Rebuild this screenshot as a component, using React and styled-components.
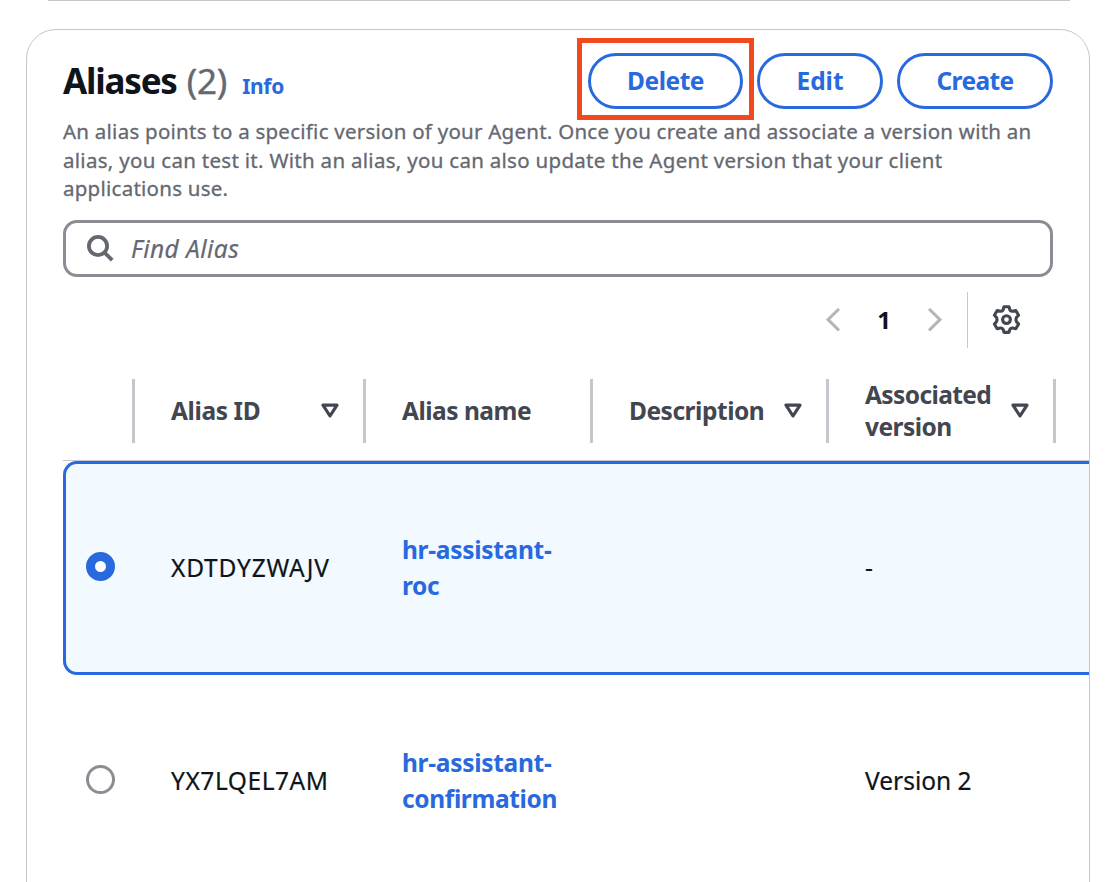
import React from 'react';
import styled, { createGlobalStyle } from 'styled-components';

const Global = createGlobalStyle`
  * { box-sizing: border-box; }
  html, body { margin: 0; background: #fff; overflow: hidden; }
  body { font-family: "Noto Sans", "Open Sans", sans-serif; color: #0f141a; }
`;

const Page = styled.div`
  height: 882px;
  overflow: hidden;
  padding: 0 18px 0 26px;
`;

const PreviousCard = styled.div`
  height: 1px;
  margin: 0 20px 28px 22px;
  background: #c6c6cd;
`;

const Card = styled.section`
  height: 900px;
  border: 1px solid #c6c6cd;
  border-radius: 30px;
  padding: 23px 0 0 36px;
  overflow: hidden;
`;

const Head = styled.header`
  width: 990px;
  height: 56px;
  display: flex;
  justify-content: space-between;
`;

const Heading = styled.div`
  display: flex;
  align-items: baseline;
  height: 56px;
  line-height: 56px;
`;

const Title = styled.h2`
  margin: 0;
  font-size: 35px;
  font-weight: 700;
  letter-spacing: -1.2px;
`;

const Count = styled.span`
  margin-left: 10px;
  font-size: 35px;
  color: #656871;
  letter-spacing: -0.2px;
  -webkit-text-stroke: 0.4px #656871;
`;

const Info = styled.a`
  margin-left: 15px;
  font-size: 21px;
  font-weight: 700;
  letter-spacing: -0.3px;
  color: #2969de;
`;

const Actions = styled.div`
  display: flex;
  gap: 14px;
`;

const Button = styled.button`
  width: ${(p) => p.$width}px;
  height: 56px;
  padding: 0 0 1px;
  border: 3px solid #2969de;
  border-radius: 28px;
  background: #fff;
  color: #2969de;
  font: 700 24.5px "Noto Sans", sans-serif;
  letter-spacing: ${(p) => p.$spacing || 0}px;
`;

const Marked = styled.div`
  position: relative;
  &::after {
    content: "";
    position: absolute;
    inset: -15px -11px -11px -11px;
    border: 5px solid #f2481d;
  }
`;

const Description = styled.p`
  margin: 8px 0 0;
  font-size: 20.5px;
  line-height: 28.5px;
  color: #656871;
  white-space: nowrap;
  -webkit-text-stroke: 0.3px #656871;
`;

const Line = styled.span`
  display: block;
  letter-spacing: ${(p) => p.$spacing || 0}px;
`;

const Search = styled.div`
  width: 990px;
  height: 57px;
  margin-top: 17px;
  padding: 1px 0 0 21px;
  display: flex;
  align-items: center;
  border: 3px solid #8c8c94;
  border-radius: 14px;
  color: #656871;
`;

const Placeholder = styled.span`
  margin-left: 17px;
  font-size: 24.5px;
  font-style: italic;
  letter-spacing: 0.45px;
  -webkit-text-stroke: 0.2px #656871;
`;

const Tools = styled.div`
  width: 990px;
  height: 56px;
  margin-top: 15px;
  padding-right: 32px;
  display: flex;
  justify-content: flex-end;
  align-items: center;
  color: #b4b4bb;
`;

const PageNumber = styled.span`
  width: 88px;
  text-align: center;
  font-size: 24px;
  font-weight: 700;
  color: #0f141a;
`;

const Divider = styled.div`
  width: 1px;
  height: 56px;
  margin: 0 24px 0 25px;
  background: #c6c6cd;
`;

const Row = styled.div`
  display: grid;
  grid-template-columns: 72px 231px 227px 236px 227px 60px;
  width: 1053px;
  align-items: center;
`;

const HeaderRow = styled(Row)`
  height: 113px;
  padding: 31px 0 17px;
  border-bottom: 1px solid #c6c6cd;
`;

const HeaderCell = styled.div`
  height: 64px;
  padding: 0 24px 0 36px;
  display: flex;
  align-items: center;
  justify-content: space-between;
  border-right: 3px solid #c6c6cd;
  font-size: 24.5px;
  line-height: 32px;
  font-weight: 700;
  color: #424650;
  white-space: nowrap;
`;

const BodyRow = styled(Row)`
  height: ${(p) => (p.$selected ? 214 : 212)}px;
  background: ${(p) => (p.$selected ? '#f2faff' : '#fff')};
  box-shadow: ${(p) => (p.$selected ? 'inset 0 0 0 3px #2969de' : 'none')};
  border-radius: 14px;
`;

const RadioCell = styled.div`
  padding: 0 0 2px 23px;
  display: flex;
`;

const Radio = styled.div`
  width: 29px;
  height: 29px;
  border-radius: 50%;
  border: ${(p) => (p.$checked ? '9px solid #2969de' : '3px solid #8c8c94')};
  background: #fff;
`;

const Cell = styled.div`
  padding-left: 36px;
  font-size: 24.5px;
  line-height: 36px;
  white-space: nowrap;
  letter-spacing: ${(p) => p.$spacing || 0}px;
  -webkit-text-stroke: ${(p) => (p.$link ? 0 : 0.2)}px #0f141a;
`;

const AliasLink = styled.a`
  display: block;
  font-weight: 700;
  color: #2969de;
`;

const Caret = () => (
  <svg width="18" height="15" viewBox="0 0 18 15" fill="none" stroke="#424650" strokeWidth="3.2" strokeLinejoin="round">
    <path d="M2 2.2H16L9 13Z" />
  </svg>
);

const Chevron = ({ right }) => (
  <svg width="14" height="24" viewBox="0 0 14 24" fill="none" stroke="currentColor" strokeWidth="3">
    <path d={right ? 'M1 1L12 11.7L1 22.4' : 'M13 1L2 11.7L13 22.4'} />
  </svg>
);

const SearchIcon = () => (
  <svg width="27" height="27" viewBox="0 0 27 27" fill="none" stroke="currentColor" strokeWidth="3.8">
    <circle cx="11" cy="11" r="9.1" />
    <path d="M17.3 17.3L25.2 25.2" />
  </svg>
);

const Gear = () => (
  <svg width="29" height="30" viewBox="0 0 29 30" fill="none" stroke="#424650" strokeWidth="3.1" strokeLinejoin="round">
    <path d="M12 1.8H17L17.8 4.6Q18.5 6.5 20.6 6.2L23.8 5.5L26.6 10.2L24.6 12.3Q23.4 14.6 24.6 16.9L26.6 19L23.8 23.7L20.6 23Q18.5 22.7 17.8 24.6L17 27.4H12L11.2 24.6Q10.5 22.7 8.4 23L5.2 23.7L2.4 19L4.4 16.9Q5.6 14.6 4.4 12.3L2.4 10.2L5.2 5.5L8.4 6.2Q10.5 6.5 11.2 4.6Z" />
    <circle cx="14.5" cy="14.6" r="3.9" />
  </svg>
);

export default function App() {
  return (
    <Page>
      <Global />
      <PreviousCard />
      <Card>
        <Head>
          <Heading>
            <Title>Aliases</Title>
            <Count>(2)</Count>
            <Info>Info</Info>
          </Heading>
          <Actions>
            <Marked><Button $width={155} $spacing={-0.45}>Delete</Button></Marked>
            <Button $width={126}>Edit</Button>
            <Button $width={156} $spacing={-0.6}>Create</Button>
          </Actions>
        </Head>
        <Description>
          <Line $spacing={0.245}>An alias points to a specific version of your Agent. Once you create and associate a version with an</Line>
          <Line $spacing={0.29}>alias, you can test it. With an alias, you can also update the Agent version that your client</Line>
          <Line $spacing={0.25}>applications use.</Line>
        </Description>
        <Search>
          <SearchIcon />
          <Placeholder>Find Alias</Placeholder>
        </Search>
        <Tools>
          <Chevron />
          <PageNumber>1</PageNumber>
          <Chevron right />
          <Divider />
          <Gear />
        </Tools>
        <HeaderRow>
          <HeaderCell />
          <HeaderCell><Line $spacing={-0.4}>Alias ID</Line><Caret /></HeaderCell>
          <HeaderCell><Line $spacing={-0.5}>Alias name</Line></HeaderCell>
          <HeaderCell><Line $spacing={-0.47}>Description</Line><Caret /></HeaderCell>
          <HeaderCell>
            <div><Line $spacing={-0.6}>Associated</Line><Line $spacing={-0.55}>version</Line></div>
            <Caret />
          </HeaderCell>
        </HeaderRow>
        <BodyRow $selected>
          <RadioCell><Radio $checked /></RadioCell>
          <Cell $spacing={0.8}>XDTDYZWAJV</Cell>
          <Cell $link><AliasLink><Line $spacing={-0.3}>hr-assistant-</Line><Line $spacing={-0.4}>roc</Line></AliasLink></Cell>
          <Cell />
          <Cell>-</Cell>
        </BodyRow>
        <BodyRow>
          <RadioCell><Radio /></RadioCell>
          <Cell $spacing={0.55}>YX7LQEL7AM</Cell>
          <Cell $link><AliasLink><Line $spacing={-0.3}>hr-assistant-</Line><Line $spacing={-0.37}>confirmation</Line></AliasLink></Cell>
          <Cell />
          <Cell>Version 2</Cell>
        </BodyRow>
      </Card>
    </Page>
  );
}
